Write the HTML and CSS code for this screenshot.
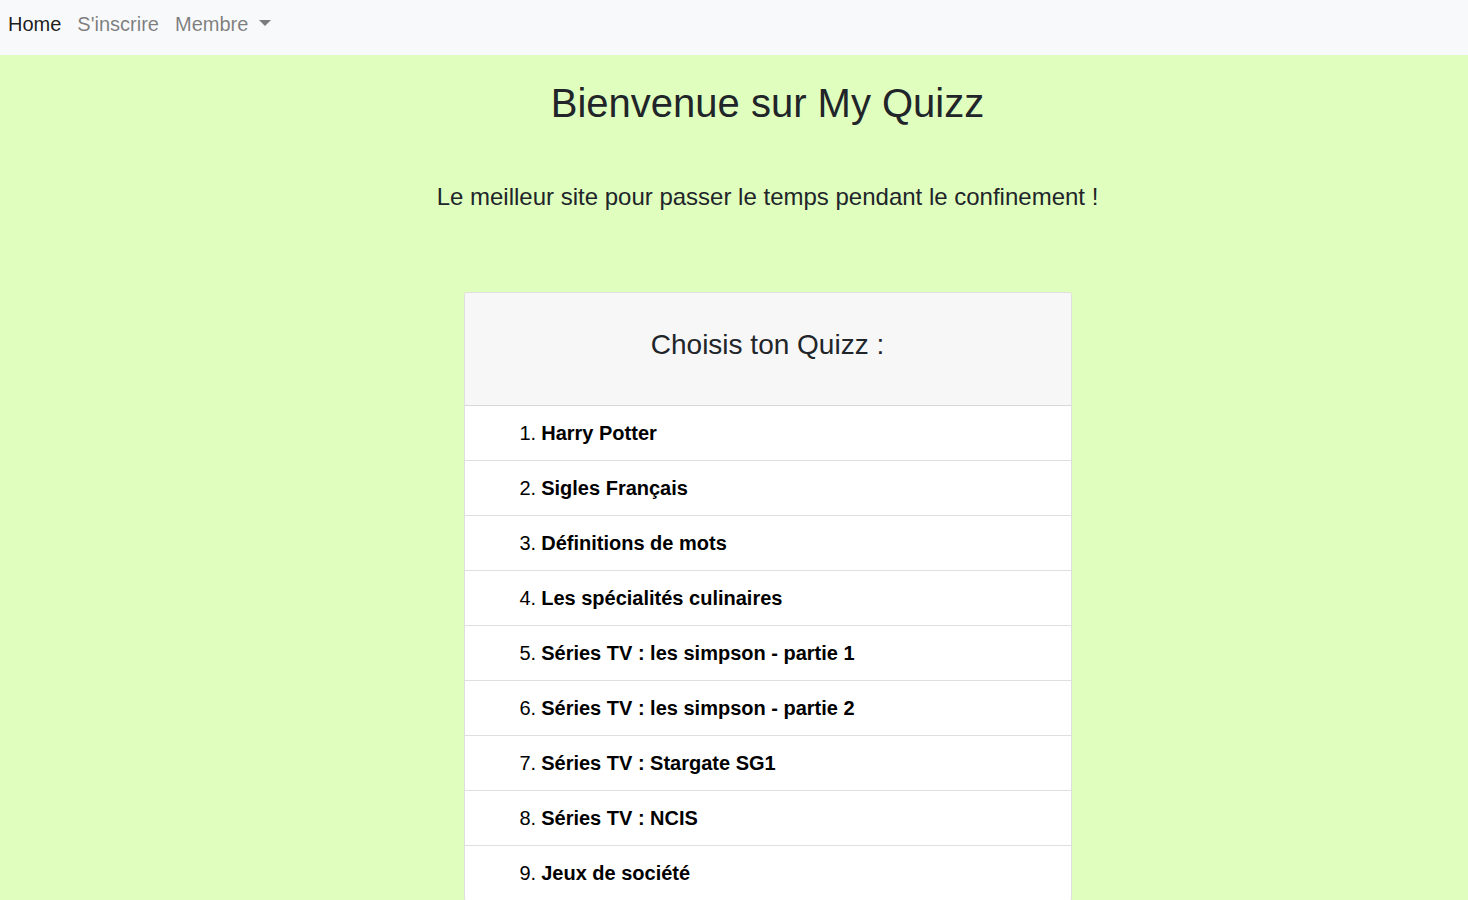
FILE: index.html
```html
<!DOCTYPE html>
<html lang="fr">
<head>
<meta charset="utf-8">
<title>My Quizz</title>
<link rel="stylesheet" href="styles.css">
</head>
<body>
<nav class="navbar">
  <a class="nav-link active" href="#">Home</a>
  <a class="nav-link" href="#">S'inscrire</a>
  <a class="nav-link dropdown" href="#">Membre <span class="caret"></span></a>
</nav>
<main class="main">
  <h1 class="title">Bienvenue sur My Quizz</h1>
  <p class="subtitle">Le meilleur site pour passer le temps pendant le confinement !</p>
  <section class="card">
    <div class="card-header"><h3 class="card-title">Choisis ton Quizz :</h3></div>
    <ol class="quiz-list">
      <li class="quiz-item"><span class="num">1.</span><b>Harry Potter</b></li>
      <li class="quiz-item"><span class="num">2.</span><b>Sigles Français</b></li>
      <li class="quiz-item"><span class="num">3.</span><b>Définitions de mots</b></li>
      <li class="quiz-item"><span class="num">4.</span><b>Les spécialités culinaires</b></li>
      <li class="quiz-item"><span class="num">5.</span><b>Séries TV : les simpson - partie 1</b></li>
      <li class="quiz-item"><span class="num">6.</span><b>Séries TV : les simpson - partie 2</b></li>
      <li class="quiz-item"><span class="num">7.</span><b>Séries TV : Stargate SG1</b></li>
      <li class="quiz-item"><span class="num">8.</span><b>Séries TV : NCIS</b></li>
      <li class="quiz-item"><span class="num">9.</span><b>Jeux de société</b></li>
    </ol>
  </section>
</main>
</body>
</html>
```

FILE: styles.css
```css
html, body {
  margin: 0;
  padding: 0;
}
body {
  background: #e0ffbf;
  font-family: "Liberation Sans", Arial, sans-serif;
  color: #212529;
  overflow: hidden;
}
.navbar {
  display: flex;
  align-items: flex-start;
  height: 55px;
  padding-top: 9px;
  box-sizing: border-box;
  background: #f8f9fa;
}
.nav-link {
  display: flex;
  align-items: center;
  padding: 0 8px;
  font-size: 20px;
  color: rgba(0,0,0,.5);
  text-decoration: none;
  line-height: 30px;
}
.nav-link.active {
  color: rgba(0,0,0,.9);
}
.caret {
  display: inline-block;
  margin-left: 11px;
  width: 0;
  height: 0;
  border-top: 6px solid rgba(0,0,0,.5);
  border-left: 6px solid transparent;
  border-right: 6px solid transparent;
  margin-top: -2px;
}
.main {
  display: flex;
  flex-direction: column;
  align-items: center;
  padding-left: 67px;
}
.title {
  margin: 24px 0 0;
  font-size: 40px;
  font-weight: 400;
  line-height: 48px;
}
.subtitle {
  margin: 52px 0 0;
  font-size: 24px;
  line-height: 36px;
}
.card {
  margin-top: 77px;
  width: 608px;
  box-sizing: border-box;
  background: #fff;
  border: 1px solid rgba(0,0,0,.125);
  border-radius: 4px;
  overflow: hidden;
}
.card-header {
  background: #f7f7f7;
  border-bottom: 1px solid rgba(0,0,0,.125);
  padding: 35px 20px 43px;
  text-align: center;
}
.card-title {
  margin: 0;
  font-size: 28px;
  font-weight: 400;
  line-height: 34px;
}
.quiz-list {
  list-style: none;
  margin: 0;
  padding: 0;
}
.quiz-item {
  display: flex;
  align-items: center;
  height: 54px;
  padding-left: 55px;
  border-bottom: 1px solid rgba(0,0,0,.125);
  font-size: 20px;
  color: #000;
}
.num {
  margin-right: 5px;
}
b {
  font-weight: 700;
}
```
